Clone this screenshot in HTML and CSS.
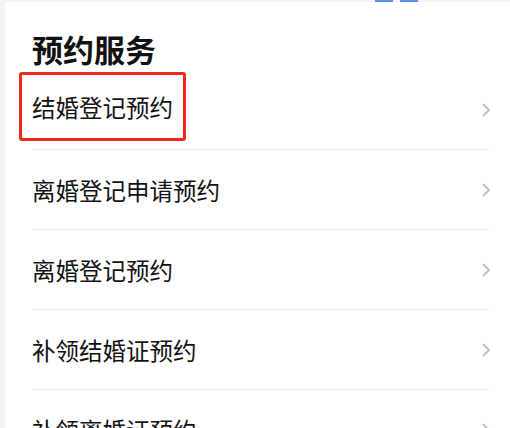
FILE: index.html
```html
<!DOCTYPE html>
<html lang="zh-CN">
<head>
  <meta charset="UTF-8">
  <title>预约服务</title>
  <link rel="stylesheet" href="styles.css">
</head>
<body>
  <div class="topbar">
    <span class="tab-edge"></span>
    <span class="tab-edge"></span>
  </div>
  <main class="card">
    <h2 class="card-title">预约服务</h2>
    <ul class="service-list">
      <li class="service-row"><span class="label marked">结婚登记预约</span><svg class="chevron" viewBox="0 0 10 16"><polyline points="2,2 8,8 2,14"/></svg></li>
      <li class="service-row"><span class="label">离婚登记申请预约</span><svg class="chevron" viewBox="0 0 10 16"><polyline points="2,2 8,8 2,14"/></svg></li>
      <li class="service-row"><span class="label">离婚登记预约</span><svg class="chevron" viewBox="0 0 10 16"><polyline points="2,2 8,8 2,14"/></svg></li>
      <li class="service-row"><span class="label">补领结婚证预约</span><svg class="chevron" viewBox="0 0 10 16"><polyline points="2,2 8,8 2,14"/></svg></li>
      <li class="service-row"><span class="label">补领离婚证预约</span><svg class="chevron" viewBox="0 0 10 16"><polyline points="2,2 8,8 2,14"/></svg></li>
    </ul>
  </main>
</body>
</html>
```
FILE: styles.css
```css
/* Page */
body { margin: 0; background-color: #f4f4f4; font-family: "Noto Sans CJK SC", "Noto Sans", sans-serif; color: #111; overflow: hidden; }

.topbar { height: 2px; display: flex; gap: 7px; padding-left: 375px; }
.tab-edge { width: 18px; height: 2px; background-color: #5b8ff0; }

.card {
  background-color: #fff;
  margin-left: 5px;
  padding: 0 21px 0 27px;
  height: 440px;
}
.card-title {
  margin: 0;
  padding-top: 26px;
  font-size: 31px;
  line-height: 42px;
  font-weight: 700;
  height: 42px;
}

.service-list { list-style: none; margin: 0; padding: 0; }
.service-row {
  display: flex;
  align-items: center;
  justify-content: space-between;
  height: 79px;
  border-bottom: 1px solid #ececec;
  font-size: 23.5px;
}
.label { line-height: 30px; }
.marked {
  border: 3px solid #f5261a;
  border-radius: 3px;
  padding: 17px 10px 16px 10px;
  margin-left: -13px;
  margin-top: -6px;
}
.chevron { width: 10px; height: 16px; margin-right: -2px; }
.chevron polyline { fill: none; stroke: #c2c2c2; stroke-width: 2; }
```
